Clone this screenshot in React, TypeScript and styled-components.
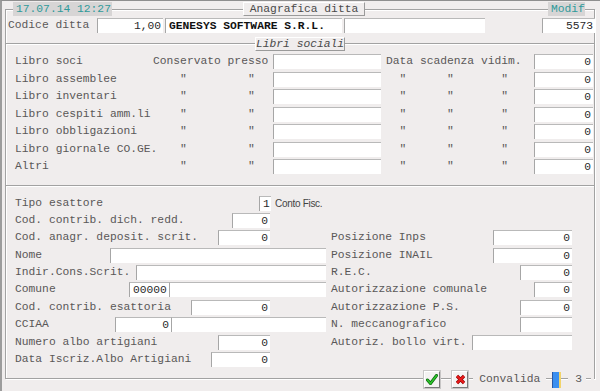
import React from 'react'
import styled, { createGlobalStyle } from 'styled-components'

const GlobalStyle = createGlobalStyle`
  html, body {
    margin: 0;
    padding: 0;
    background: #f0eded;
  }
`

const Window = styled.div`
  width: 600px;
  height: 391px;
  box-sizing: border-box;
  border-left: 2px solid #9c9c9c;
  border-top: 1px solid #8e8e8e;
  background: #f0eded;
  overflow: hidden;
  font-family: 'Liberation Mono', 'Courier New', monospace;
  font-size: 11.3px;
  color: #5a5858;
`

const Frame = styled.div`
  margin: 8px 0 0 3px;
  width: 590px;
  height: 370px;
  box-sizing: border-box;
  border: 1px solid #a2a2a2;
  box-shadow: inset 1px 1px 0 #fff, 1px 1px 0 #fff;
  display: flex;
  flex-direction: column;
`

const Header = styled.div`
  display: flex;
  height: 14px;
  margin-top: -8px;
`

const Badge = styled.div<{ $ml: number; $w: number }>`
  margin-left: ${p => p.$ml}px;
  width: ${p => p.$w}px;
  box-sizing: border-box;
  padding-left: 3px;
  background: #d7d5d5;
  color: #2f9a9a;
  line-height: 14px;
  white-space: nowrap;
`

const TitleBox = styled.div<{ $ml?: number; $w: number; $italic?: boolean }>`
  flex: none;
  margin-left: ${p => p.$ml ?? 0}px;
  width: ${p => p.$w}px;
  height: 14px;
  box-sizing: border-box;
  background: #f0eded;
  border: 1px solid #fff;
  border-right-color: #9a9a9a;
  border-bottom-color: #9a9a9a;
  text-align: center;
  line-height: 12px;
  color: #4a4a4a;
  white-space: nowrap;
  font-style: ${p => (p.$italic ? 'italic' : 'normal')};
`

const Row = styled.div<{ $mt?: number }>`
  display: flex;
  align-items: center;
  height: 15px;
  margin-top: ${p => p.$mt ?? 0}px;
`

const Label = styled.span<{ $w?: number; $pl?: number }>`
  white-space: pre;
  flex: none;
  width: ${p => (p.$w ? `${p.$w}px` : 'auto')};
  padding-left: ${p => p.$pl ?? 0}px;
  line-height: 15px;
`

const Field = styled.div<{ $w?: number; $ml?: number; $left?: boolean; $bold?: boolean; $auto?: boolean }>`
  flex: none;
  width: ${p => (p.$w ? `${p.$w}px` : 'auto')};
  margin-left: ${p => (p.$auto ? 'auto' : `${p.$ml ?? 0}px`)};
  height: 15px;
  box-sizing: border-box;
  background: #fff;
  border-top: 1px solid #b9b9b9;
  border-left: 1px solid #a6a6a6;
  padding: 0 2px 0 3px;
  line-height: 14px;
  text-align: ${p => (p.$left ? 'left' : 'right')};
  color: ${p => (p.$bold ? '#111' : '#2a2a2a')};
  font-weight: ${p => (p.$bold ? 'bold' : 'normal')};
  white-space: pre;
  overflow: hidden;
`

const Divider = styled.div<{ $mt: number }>`
  display: flex;
  align-items: center;
  height: 14px;
  margin-top: ${p => p.$mt}px;

  &::before,
  &::after {
    content: '';
    flex: 1;
    border-top: 1px solid #a2a2a2;
    border-bottom: 1px solid #fff;
  }
`

const Rule = styled.div<{ $mt: number }>`
  margin-top: ${p => p.$mt}px;
  border-top: 1px solid #a2a2a2;
  border-bottom: 1px solid #fff;
`

const BooksGrid = styled.div`
  display: grid;
  grid-template-columns: 138px 120px 108px 5px 148px 59px;
  grid-auto-rows: 15px;
  row-gap: 2.5px;
  margin-top: 3px;
  padding-left: 9px;
  align-items: center;
`

const Ditto = styled.span<{ $col: number }>`
  grid-column: ${p => p.$col};
  white-space: pre;
  line-height: 15px;
`

const Lower = styled.div`
  display: grid;
  grid-auto-rows: 15px;
  row-gap: 2.4px;
  margin-top: 8.5px;
`

const LeftCell = styled.div<{ $wide?: boolean }>`
  display: flex;
  align-items: center;
  width: 320px;
  height: 15px;
  box-sizing: border-box;
  padding-left: 9px;
  padding-right: ${p => (p.$wide ? 0 : 56)}px;
`

const RightCell = styled.div`
  display: flex;
  align-items: center;
  width: 246px;
  height: 15px;
  box-sizing: border-box;
  padding-left: 5px;
`

const Note = styled.span`
  flex: none;
  width: 51px;
  margin-left: 4px;
  font-family: 'Liberation Sans', Arial, sans-serif;
  font-size: 10px;
  letter-spacing: -0.3px;
  color: #444;
  white-space: nowrap;
`

const Footer = styled.div`
  margin-top: auto;
  margin-bottom: -10px;
  height: 17px;
  display: flex;
  align-items: center;
  justify-content: flex-end;
`

const ToolButton = styled.div<{ $ml?: number }>`
  margin-left: ${p => p.$ml ?? 0}px;
  width: 16px;
  height: 17px;
  box-sizing: border-box;
  background: #f4f2f2;
  border: 1px solid;
  border-color: #fff #7a7a7a #7a7a7a #fff;
  outline: 1px solid #c8c6c6;
  display: flex;
  align-items: center;
  justify-content: center;
`

const Mask = styled.div<{ $ml?: number; $pl?: number; $pr?: number }>`
  margin-left: ${p => p.$ml ?? 0}px;
  padding: 0 ${p => p.$pr ?? 0}px 0 ${p => p.$pl ?? 0}px;
  background: #f0eded;
  line-height: 17px;
  height: 17px;
  white-space: pre;
`

const Progress = styled.div`
  margin-left: 6px;
  width: 9px;
  height: 16px;
  box-sizing: border-box;
  background: #3b8ff0;
  border-left: 1px solid #2a5aa8;
  border-right: 2px solid #f2d46a;
`

const books = [
  'Libro soci',
  'Libro assemblee',
  'Libro inventari',
  'Libro cespiti amm.li',
  'Libro obbligazioni',
  'Libro giornale CO.GE.',
  'Altri',
]

function CheckIcon() {
  return (
    <svg width="12" height="11" viewBox="0 0 12 11">
      <path d="M1.5 6 L4.5 9.5 L10.5 1.5" fill="none" stroke="#0a6a0a" strokeWidth="3" strokeLinecap="round" />
      <path d="M1.5 6 L4.5 9.5 L10.5 1.5" fill="none" stroke="#2ec42e" strokeWidth="1.6" strokeLinecap="round" />
    </svg>
  )
}

function CrossIcon() {
  return (
    <svg width="11" height="11" viewBox="0 0 11 11">
      <path d="M2 2 L9 9 M9 2 L2 9" fill="none" stroke="#8a0000" strokeWidth="3.2" />
      <path d="M2 2 L9 9 M9 2 L2 9" fill="none" stroke="#ec1a1a" strokeWidth="2" />
    </svg>
  )
}

export default function App() {
  return (
    <>
      <GlobalStyle />
      <Window>
        <Frame>
          <Header>
            <Badge $ml={7} $w={99}>17.07.14 12:27</Badge>
            <TitleBox $ml={131} $w={122}>Anagrafica ditta</TitleBox>
            <Badge $ml={183} $w={37}>Modif</Badge>
          </Header>

          <Row $mt={2}>
            <Label $w={89} $pl={2}>Codice ditta</Label>
            <Field $w={66}>1,00</Field>
            <Field $w={177} $ml={2} $left $bold>GENESYS SOFTWARE S.R.L.</Field>
            <Field $w={141} $ml={2} />
            <Field $w={53} $ml={57}>5573</Field>
          </Row>

          <Divider $mt={4}>
            <TitleBox $w={90} $italic>Libri sociali</TitleBox>
          </Divider>

          <BooksGrid>
            {books.map((name, i) => (
              <React.Fragment key={name}>
                <Label>{name}</Label>
                {i === 0 ? <Label>Conservato presso</Label> : <Ditto $col={2}>{'    "         "'}</Ditto>}
                <Field />
                <span />
                {i === 0 ? <Label>Data scadenza vidim.</Label> : <Ditto $col={5}>{'  "      "       "'}</Ditto>}
                <Field>0</Field>
              </React.Fragment>
            ))}
          </BooksGrid>

          <Rule $mt={11} />

          <Lower>
            <Row>
              <LeftCell $wide>
                <Label>Tipo esattore</Label>
                <Field $w={12} $auto>1</Field>
                <Note>Conto Fisc.</Note>
              </LeftCell>
            </Row>
            <Row>
              <LeftCell>
                <Label>Cod. contrib. dich. redd.</Label>
                <Field $w={38} $auto>0</Field>
              </LeftCell>
            </Row>
            <Row>
              <LeftCell>
                <Label>Cod. anagr. deposit. scrit.</Label>
                <Field $w={52} $auto>0</Field>
              </LeftCell>
              <RightCell>
                <Label>Posizione Inps</Label>
                <Field $w={79} $auto>0</Field>
              </RightCell>
            </Row>
            <Row>
              <LeftCell $wide>
                <Label>Nome</Label>
                <Field $w={216} $auto />
              </LeftCell>
              <RightCell>
                <Label>Posizione INAIL</Label>
                <Field $w={79} $auto>0</Field>
              </RightCell>
            </Row>
            <Row>
              <LeftCell $wide>
                <Label>Indir.Cons.Scrit.</Label>
                <Field $w={190} $auto />
              </LeftCell>
              <RightCell>
                <Label>R.E.C.</Label>
                <Field $w={52} $auto>0</Field>
              </RightCell>
            </Row>
            <Row>
              <LeftCell $wide>
                <Label>Comune</Label>
                <Field $w={40} $auto $left>00000</Field>
                <Field $w={157} />
              </LeftCell>
              <RightCell>
                <Label>Autorizzazione comunale</Label>
                <Field $w={38} $auto>0</Field>
              </RightCell>
            </Row>
            <Row>
              <LeftCell>
                <Label>Cod. contrib. esattoria</Label>
                <Field $w={79} $auto>0</Field>
              </LeftCell>
              <RightCell>
                <Label>Autorizzazione P.S.</Label>
                <Field $w={52} $auto>0</Field>
              </RightCell>
            </Row>
            <Row>
              <LeftCell $wide>
                <Label>CCIAA</Label>
                <Field $w={56} $auto>0</Field>
                <Field $w={155} />
              </LeftCell>
              <RightCell>
                <Label>N. meccanografico</Label>
                <Field $w={52} $auto />
              </RightCell>
            </Row>
            <Row>
              <LeftCell>
                <Label>Numero albo artigiani</Label>
                <Field $w={52} $auto>0</Field>
              </LeftCell>
              <RightCell>
                <Label>Autoriz. bollo virt.</Label>
                <Field $w={100} $auto />
              </RightCell>
            </Row>
            <Row>
              <LeftCell>
                <Label>Data Iscriz.Albo Artigiani</Label>
                <Field $w={59} $auto>0</Field>
              </LeftCell>
            </Row>
          </Lower>

          <Footer>
            <ToolButton>
              <CheckIcon />
            </ToolButton>
            <ToolButton $ml={12}>
              <CrossIcon />
            </ToolButton>
            <Mask $ml={5} $pl={6} $pr={6}>Convalida</Mask>
            <Progress />
            <Mask $ml={7} $pl={7} $pr={4}>3</Mask>
            <Mask $ml={5} $pr={3} />
          </Footer>
        </Frame>
      </Window>
    </>
  )
}
